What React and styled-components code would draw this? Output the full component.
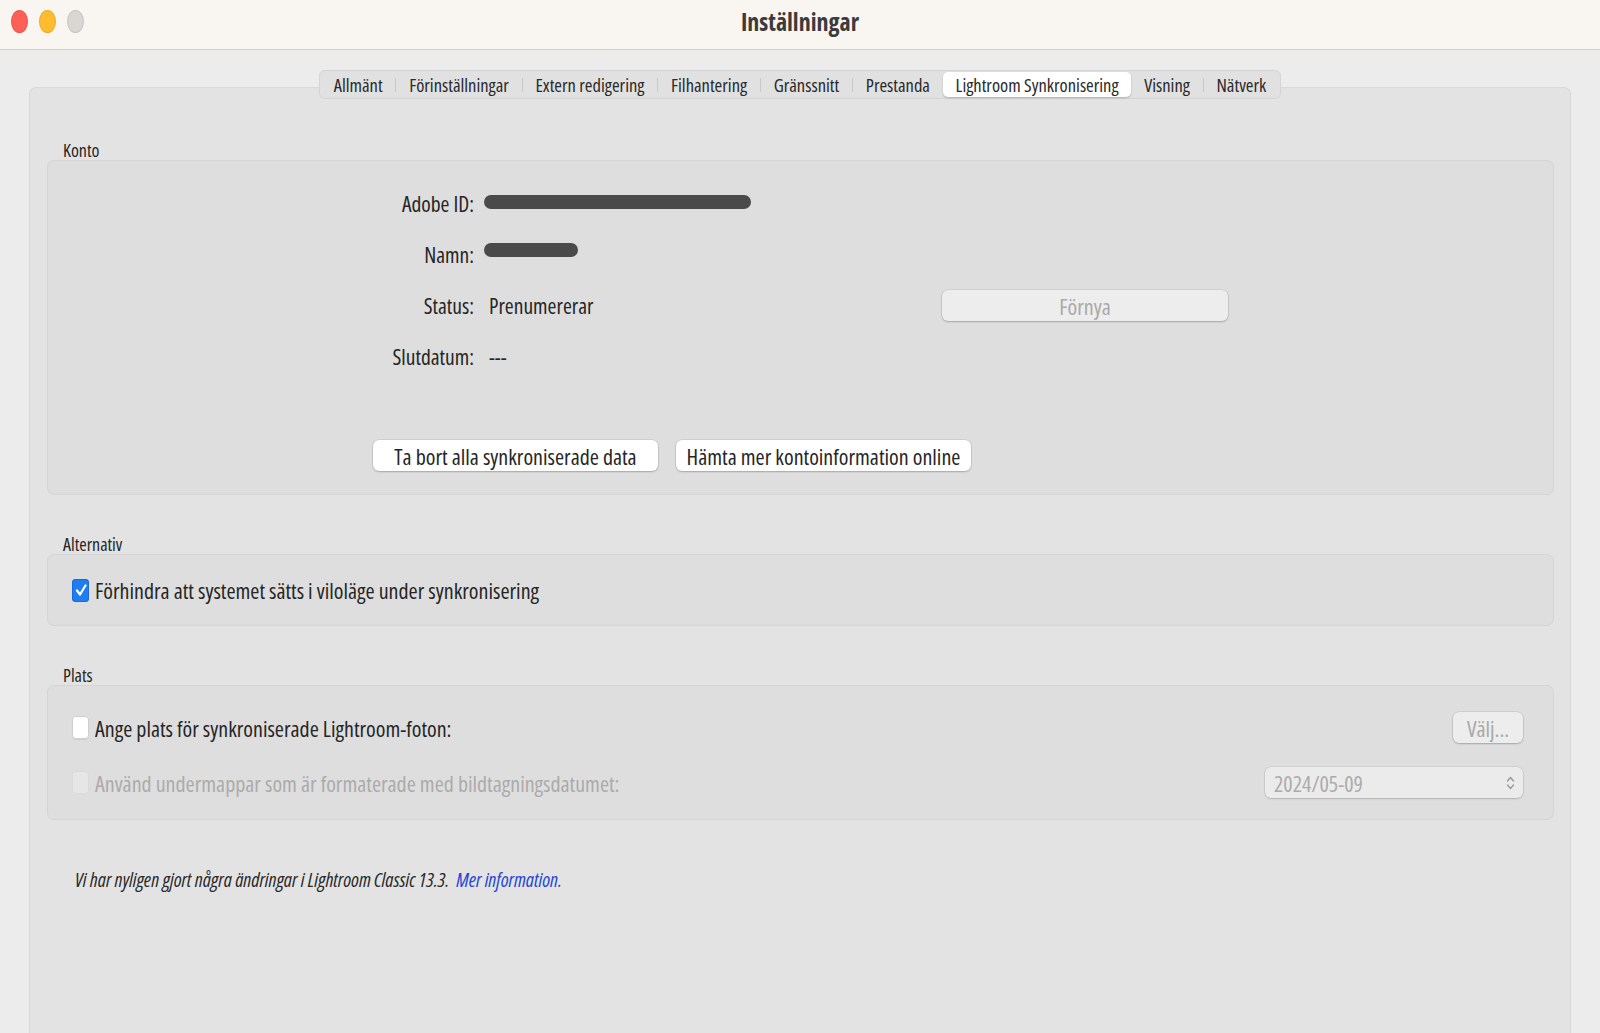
import styled, { createGlobalStyle } from "styled-components";

const GlobalStyle = createGlobalStyle`
  html, body {
    margin: 0;
    padding: 0;
    background: #ececec;
  }
  body {
    width: 1600px;
    height: 1033px;
    overflow: hidden;
    font-family: "Open Sans", "Liberation Sans", sans-serif;
    font-stretch: 75%;
    font-weight: 370;
    color: #262626;
  }
`;

const Window = styled.div`
  width: 1600px;
  height: 1033px;
  display: flex;
  flex-direction: column;
  background: #ececec;
`;

const TitleBar = styled.div`
  height: 50px;
  box-sizing: border-box;
  flex-shrink: 0;
  display: flex;
  align-items: center;
  padding-bottom: 7px;
  position: relative;
  background: #f9f5f0;
  border-bottom: 1px solid #d2cfca;
`;

const Lights = styled.div`
  display: flex;
  gap: 11px;
  padding-left: 11px;
`;

const Light = styled.span`
  width: 17px;
  height: 23px;
  border-radius: 50%;
  background: ${(p) => p.color};
  box-shadow: inset 0 0 0 1px rgba(0, 0, 0, 0.08);
`;

const Title = styled.div`
  position: absolute;
  left: 0;
  right: 0;
  text-align: center;
  font-size: 24px;
  font-weight: 700;
  color: #3b3b3b;
  pointer-events: none;
`;

const Body = styled.div`
  flex: 1;
  display: flex;
  flex-direction: column;
  padding: 20px 29px 0;
`;

const TabRow = styled.div`
  display: flex;
  justify-content: center;
  margin-bottom: -12px;
  position: relative;
  z-index: 1;
`;

const TabBar = styled.div`
  display: flex;
  align-items: center;
  height: 29px;
  padding: 0 1px;
  background: #e1e1e1;
  border: 1px solid #d4d4d4;
  border-radius: 6px;
  box-sizing: border-box;
`;

const Tab = styled.div`
  height: 25px;
  display: flex;
  align-items: center;
  padding: 0 12.8px;
  font-size: 18.5px;
  color: #2a2a2a;
  border-radius: 5px;
  background: ${(p) => (p.active ? "#ffffff" : "transparent")};
  box-shadow: ${(p) => (p.active ? "0 1px 2px rgba(0,0,0,0.22)" : "none")};
`;

const TabSep = styled.span`
  width: 1px;
  height: 14px;
  background: ${(p) => (p.hidden ? "transparent" : "#c9c9c9")};
`;

const Panel = styled.div`
  flex: 1;
  background: #e3e3e3;
  border: 1px solid #d9d9d9;
  border-bottom: none;
  border-radius: 7px 7px 0 0;
  padding: 52px 16px 0 17px;
`;

const SectionLabel = styled.div`
  height: 20px;
  line-height: 20px;
  padding-left: 16px;
  margin-top: ${(p) => p.gap || 0}px;
  font-size: 18px;
  color: #262626;
`;

const Box = styled.div`
  background: #dedede;
  border: 1px solid #d5d5d5;
  border-radius: 7px;
  box-sizing: border-box;
  height: ${(p) => p.h}px;
`;

const AccountGrid = styled.div`
  display: grid;
  grid-template-columns: 426px 448px 286px;
  grid-auto-rows: 51px;
  column-gap: 10px;
  padding-top: 17px;
  align-items: center;
`;

const FieldLabel = styled.div`
  text-align: right;
  font-size: 21.5px;
  color: #262626;
`;

const FieldValue = styled.div`
  font-size: 21.5px;
  color: #262626;
  padding-left: 5px;
`;

const Redacted = styled.div`
  width: ${(p) => p.w}px;
  height: 14px;
  border-radius: 8px;
  background: #4a4a4a;
  margin-top: ${(p) => p.offset || 0}px;
`;

const PushButton = styled.button`
  height: 31px;
  box-sizing: border-box;
  border: none;
  border-radius: 6px;
  font-family: inherit;
  font-stretch: inherit;
  font-weight: inherit;
  font-size: 22px;
  padding: 0;
  white-space: nowrap;
  width: ${(p) => (p.w ? `${p.w}px` : "auto")};
  color: ${(p) => (p.disabled ? "#a9a9a9" : "#262626")};
  background: ${(p) => (p.disabled ? "#ededed" : "#ffffff")};
  box-shadow: 0 0 0 0.5px rgba(0, 0, 0, 0.12), 0 1px 2px rgba(0, 0, 0, 0.2);
`;

const ButtonRow = styled.div`
  display: flex;
  gap: 18px;
  padding-left: 325px;
  margin-top: 58px;
`;

const CheckRow = styled.div`
  height: ${(p) => p.h || 55}px;
  display: flex;
  align-items: center;
  padding: 0 30px 0 24px;
  gap: 6px;
`;

const CheckBox = styled.span`
  width: 17px;
  height: 23px;
  box-sizing: border-box;
  border-radius: 4px;
  flex-shrink: 0;
  display: flex;
  align-items: center;
  justify-content: center;
  background: ${(p) => (p.checked ? "#1f7cf2" : p.disabled ? "#e6e6e6" : "#ffffff")};
  box-shadow: ${(p) =>
    p.checked
      ? "inset 0 0 0 1px #1a6bd6"
      : p.disabled
      ? "inset 0 0 0 1px #dadada"
      : "inset 0 0 0 1px #cfcfcf, 0 1px 1px rgba(0,0,0,0.08)"};
`;

const CheckText = styled.span`
  font-size: 22px;
  flex: 1;
  color: ${(p) => (p.disabled ? "#ababab" : "#262626")};
`;

const SelectBox = styled.div`
  width: 258px;
  height: 31px;
  box-sizing: border-box;
  border-radius: 6px;
  background: #ebebeb;
  box-shadow: 0 0 0 0.5px rgba(0, 0, 0, 0.1), 0 1px 2px rgba(0, 0, 0, 0.15);
  display: flex;
  align-items: center;
  justify-content: space-between;
  padding: 0 8px 0 9px;
  font-size: 22px;
  color: #ababab;
`;

const PlatsRows = styled.div`
  padding-top: 14px;
`;

const Footer = styled.div`
  margin-top: 46px;
  padding-left: 28px;
  font-style: italic;
  font-size: 19.6px;
  color: #2a2a2a;
`;

const Link = styled.a`
  color: #2346d4;
  text-decoration: none;
  margin-left: 7px;
`;

function Check() {
  return (
    <svg width="12" height="14" viewBox="0 0 12 14">
      <path
        d="M2 7.5 L5 11.5 L10.5 2.5"
        fill="none"
        stroke="#fff"
        strokeWidth="2.2"
        strokeLinecap="round"
        strokeLinejoin="round"
      />
    </svg>
  );
}

function Chevrons() {
  return (
    <svg width="9" height="16" viewBox="0 0 9 16">
      <path
        d="M1.5 6 L4.5 2.5 L7.5 6 M1.5 10 L4.5 13.5 L7.5 10"
        fill="none"
        stroke="#9a9a9a"
        strokeWidth="1.4"
        strokeLinecap="round"
        strokeLinejoin="round"
      />
    </svg>
  );
}

const tabs = [
  "Allmänt",
  "Förinställningar",
  "Extern redigering",
  "Filhantering",
  "Gränssnitt",
  "Prestanda",
  "Lightroom Synkronisering",
  "Visning",
  "Nätverk",
];
const activeTab = 6;

function App() {
  return (
    <>
      <GlobalStyle />
      <Window>
        <TitleBar>
          <Lights>
            <Light color="#fe5f57" />
            <Light color="#febc2e" />
            <Light color="#d9d6d3" />
          </Lights>
          <Title>Inställningar</Title>
        </TitleBar>
        <Body>
          <TabRow>
            <TabBar>
              {tabs.map((t, i) => (
                <span key={t} style={{ display: "contents" }}>
                  {i > 0 && <TabSep hidden={i === activeTab || i - 1 === activeTab} />}
                  <Tab active={i === activeTab}>{t}</Tab>
                </span>
              ))}
            </TabBar>
          </TabRow>
          <Panel>
            <SectionLabel>Konto</SectionLabel>
            <Box h={335}>
              <AccountGrid>
                <FieldLabel>Adobe ID:</FieldLabel>
                <Redacted w={267} offset={-4} />
                <span />
                <FieldLabel>Namn:</FieldLabel>
                <Redacted w={94} offset={-9} />
                <span />
                <FieldLabel>Status:</FieldLabel>
                <FieldValue>Prenumererar</FieldValue>
                <PushButton disabled w={286}>
                  Förnya
                </PushButton>
                <FieldLabel>Slutdatum:</FieldLabel>
                <FieldValue>---</FieldValue>
                <span />
              </AccountGrid>
              <ButtonRow>
                <PushButton w={285}>Ta bort alla synkroniserade data</PushButton>
                <PushButton w={295}>Hämta mer kontoinformation online</PushButton>
              </ButtonRow>
            </Box>

            <SectionLabel gap={39}>Alternativ</SectionLabel>
            <Box h={72}>
              <CheckRow h={70}>
                <CheckBox checked>
                  <Check />
                </CheckBox>
                <CheckText>Förhindra att systemet sätts i viloläge under synkronisering</CheckText>
              </CheckRow>
            </Box>

            <SectionLabel gap={39}>Plats</SectionLabel>
            <Box h={135}>
              <PlatsRows>
                <CheckRow>
                  <CheckBox />
                  <CheckText>Ange plats för synkroniserade Lightroom-foton:</CheckText>
                  <PushButton disabled w={70}>
                    Välj...
                  </PushButton>
                </CheckRow>
                <CheckRow>
                  <CheckBox disabled />
                  <CheckText disabled>
                    Använd undermappar som är formaterade med bildtagningsdatumet:
                  </CheckText>
                  <SelectBox>
                    <span>2024/05-09</span>
                    <Chevrons />
                  </SelectBox>
                </CheckRow>
              </PlatsRows>
            </Box>

            <Footer>
              Vi har nyligen gjort några ändringar i Lightroom Classic 13.3.
              <Link href="#">Mer information.</Link>
            </Footer>
          </Panel>
        </Body>
      </Window>
    </>
  );
}

export default App;
